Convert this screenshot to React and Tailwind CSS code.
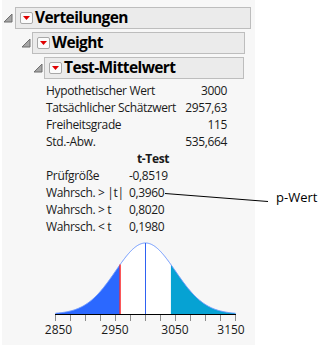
import React from "react";

// curve geometry, local to the chart svg (page x - 2, page y - 235)
const MEAN = 3000;
const SE = 49.73;
const CX = 143.5;
const SCALE = 0.6;
const AXIS_Y = 79;
const AMP = 71;

const px = (v) => CX + (v - MEAN) * SCALE;
const py = (v) => AXIS_Y - AMP * Math.exp(-0.5 * ((v - MEAN) / SE) ** 2);

const areaPath = (from, to) => {
  let d = `M ${px(from).toFixed(2)} ${AXIS_Y}`;
  for (let v = from; v <= to; v += 1) d += ` L ${px(v).toFixed(2)} ${py(v).toFixed(2)}`;
  d += ` L ${px(to).toFixed(2)} ${py(to).toFixed(2)} L ${px(to).toFixed(2)} ${AXIS_Y} Z`;
  return d;
};

const curvePath = (() => {
  let d = `M ${px(2850).toFixed(2)} ${py(2850).toFixed(2)}`;
  for (let v = 2851; v <= 3150; v += 1) d += ` L ${px(v).toFixed(2)} ${py(v).toFixed(2)}`;
  return d;
})();

const ESTIMATE = 2957.63;
const MIRROR = 2 * MEAN - ESTIMATE;

const Triangle = () => (
  <svg width="10" height="10" viewBox="0 0 10 10" className="shrink-0">
    <polygon points="9,1 9,9 1,9" fill="#a6a6a6" stroke="#6f6f6f" strokeWidth="1" strokeLinejoin="round" />
  </svg>
);

const MenuIcon = () => (
  <div className="w-[13px] h-[12px] rounded-[2px] border border-[#a8a8a8] bg-[#fbfbfb] flex items-center justify-center shrink-0">
    <svg width="9" height="6" viewBox="0 0 9 6">
      <polygon points="1,1 8,1 4.5,5" fill="#e00000" />
    </svg>
  </div>
);

const Header = ({ pad, gap, right, title }) => (
  <div className={`flex items-center h-[22px] ${pad} ${right}`}>
    <div className={`flex items-center ${gap}`}>
      <Triangle />
    </div>
    <div className="flex-1 h-[22px] border border-[#bdbdbd] bg-[#ebebeb] flex items-center pl-[4px] gap-[2px]">
      <MenuIcon />
      <span className="text-[15.5px] font-bold text-black leading-none tracking-[-0.6px]">{title}</span>
    </div>
  </div>
);

const summary = [
  ["Hypothetischer Wert", "3000"],
  ["Tatsächlicher Schätzwert", "2957,63"],
  ["Freiheitsgrade", "115"],
  ["Std.-Abw.", "535,664"],
];

const tTest = [
  ["Prüfgröße", "-0,8519"],
  ["Wahrsch. > |t|", "0,3960"],
  ["Wahrsch. > t", "0,8020"],
  ["Wahrsch. < t", "0,1980"],
];

const ticks = Array.from({ length: 13 }, (_, i) => 53.5 + i * 15);

export default function App() {
  return (
    <div className="relative w-[333px] h-[348px] bg-white font-['Open_Sans',sans-serif] text-[#1a1a1a] overflow-hidden">
      <div className="ml-[2px] w-[253px] h-[345px] bg-[#f7f7f7] pt-[7px]">
        <div className="flex flex-col gap-[3px]">
          <Header pad="pl-[1px]" gap="w-[12px]" right="mr-[4px]" title="Verteilungen" />
          <Header pad="pl-[19px]" gap="w-[11px]" right="mr-[10px]" title="Weight" />
          <Header pad="pl-[31px]" gap="w-[11px]" right="mr-[11px]" title="Test-Mittelwert" />
        </div>

        <div className="pl-[44px] pt-[3px] text-[12px] tracking-[-0.35px]">
          <div className="w-[181px]">
            {summary.map(([label, value]) => (
              <div key={label} className="flex justify-between h-[17px] leading-[17px]">
                <span>{label}</span>
                <span>{value}</span>
              </div>
            ))}
          </div>
          <div className="h-[17px] leading-[17px] pl-[91px] font-bold">t-Test</div>
          {tTest.map(([label, value]) => (
            <div key={label} className="flex h-[17px] leading-[17px]">
              <span className="w-[83px]">{label}</span>
              <span>{value}</span>
            </div>
          ))}
        </div>

        <svg width="253" height="110" className="block">
          <path d={areaPath(2850, 3150)} fill="#ffffff" />
          <path d={areaPath(2850, ESTIMATE)} fill="#2b68ff" />
          <path d={areaPath(MIRROR, 3150)} fill="#06a2d3" />
          <path d={curvePath} fill="none" stroke="#6a96ff" strokeWidth="1" />
          <line x1={CX} y1={py(MEAN)} x2={CX} y2={AXIS_Y} stroke="#2f62f2" strokeWidth="1" />
          <line x1={px(ESTIMATE)} y1={py(ESTIMATE)} x2={px(ESTIMATE)} y2={AXIS_Y} stroke="#ff2a2a" strokeWidth="1.4" />
          {ticks.map((x) => (
            <line key={x} x1={x} y1={AXIS_Y} x2={x} y2={AXIS_Y + 7} stroke="#8c8c8c" strokeWidth="1" />
          ))}
          <line x1="53" y1={AXIS_Y + 0.5} x2="234" y2={AXIS_Y + 0.5} stroke="#000000" strokeWidth="1" />
          <g fontSize="12" fill="#1a1a1a" textAnchor="middle">
            <text x="56.5" y="99">2850</text>
            <text x="113" y="99">2950</text>
            <text x="173" y="99">3050</text>
            <text x="229" y="99">3150</text>
          </g>
        </svg>
      </div>

      <svg className="absolute left-[165px] top-[192px]" width="104" height="11">
        <line x1="0" y1="1.5" x2="103" y2="9.5" stroke="#000000" strokeWidth="1" />
      </svg>
      <span className="absolute left-[276px] top-[188px] text-[13px] leading-[18px] text-black">p-Wert</span>
    </div>
  );
}
